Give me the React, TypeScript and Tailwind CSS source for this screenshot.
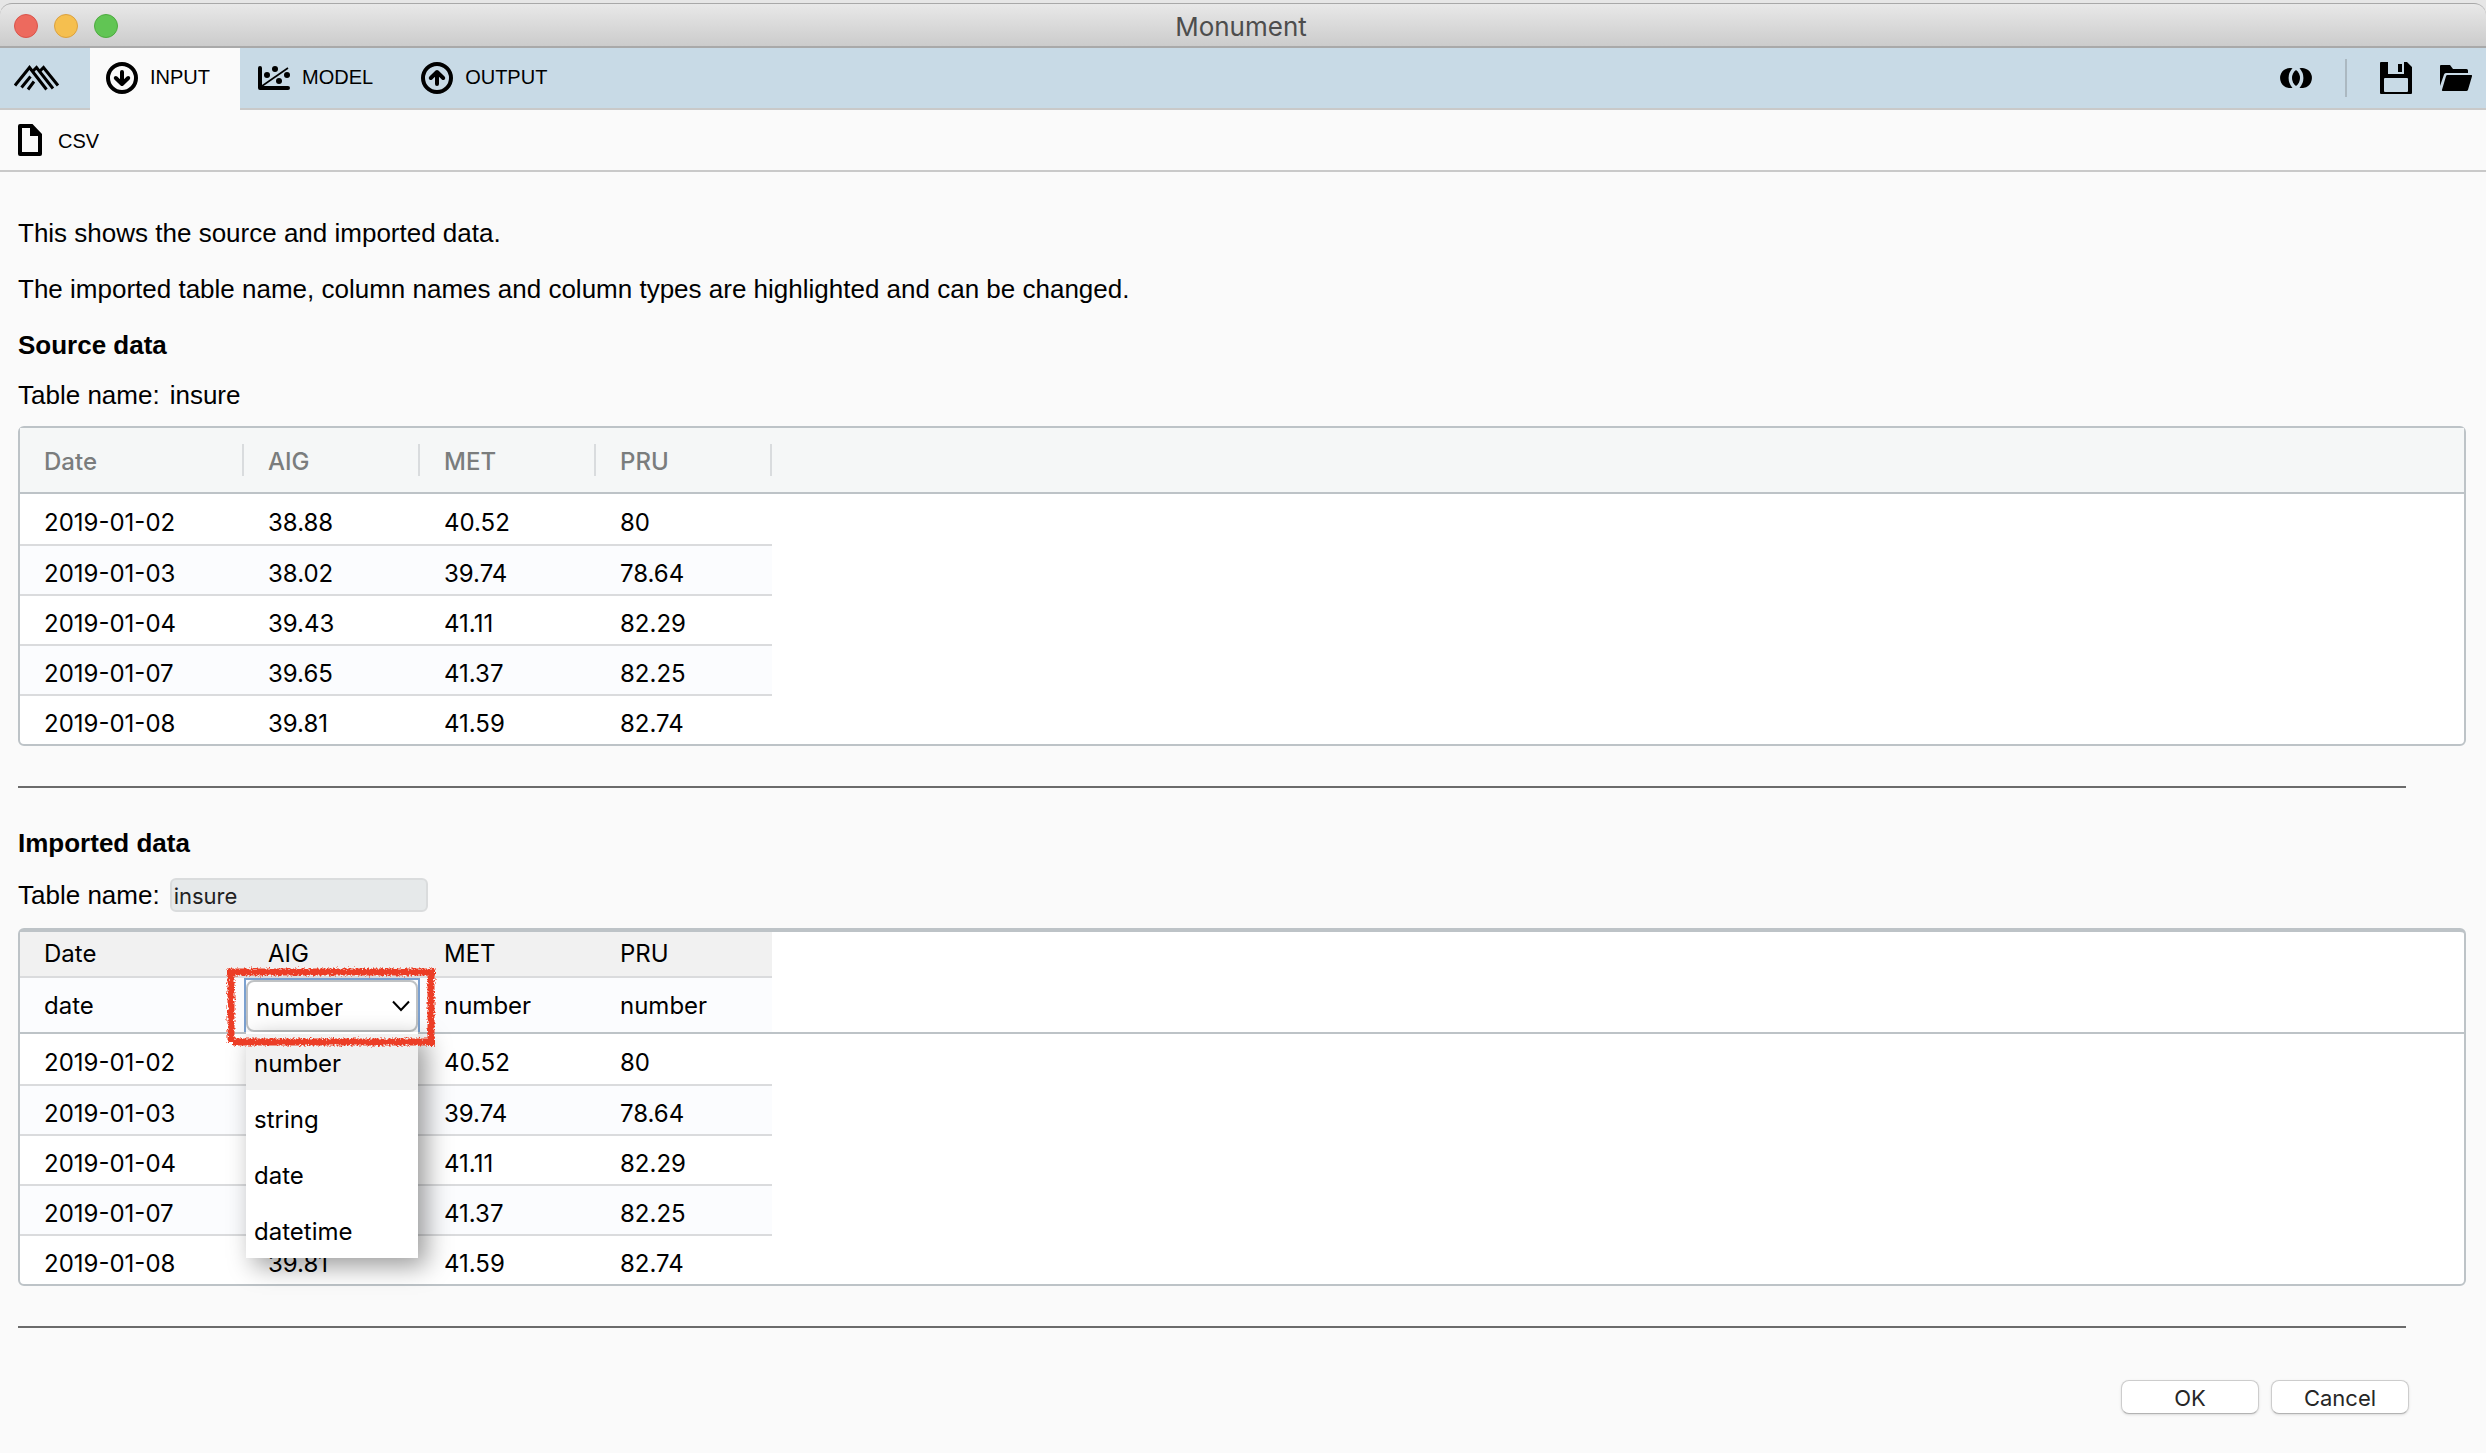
import React, { useState } from 'react';

const columns = ['Date', 'AIG', 'MET', 'PRU'];

const rows = [
  ['2019-01-02', '38.88', '40.52', '80'],
  ['2019-01-03', '38.02', '39.74', '78.64'],
  ['2019-01-04', '39.43', '41.11', '82.29'],
  ['2019-01-07', '39.65', '41.37', '82.25'],
  ['2019-01-08', '39.81', '41.59', '82.74'],
];

const typeOptions = ['number', 'string', 'date', 'datetime'];

function Logo() {
  return (
    <svg width="46" height="26" viewBox="0 0 46 26" fill="none" stroke="black" strokeWidth="3">
      <path d="M1 20.5 15.500 2.500l17 22" />
      <path d="M19 6 22.500 2.500l16.500 21" />
      <path d="M26 6 29.500 2.500l14.500 18" />
      <path d="M7.5 22.5 16.500 11.500M14 24.500l6-8" />
    </svg>
  );
}

function CircleArrow({ up = false }: { up?: boolean }) {
  return (
    <svg width="32" height="32" viewBox="0 0 32 32" fill="none" stroke="black" strokeWidth="4">
      <circle cx="16" cy="16" r="14" />
      {up ? (
        <path d="M16 22V11M9.800 16 16 10l6.200 6" strokeLinecap="round" strokeLinejoin="round" />
      ) : (
        <path d="M16 10v11M9.800 16 16 22l6.200-6" strokeLinecap="round" strokeLinejoin="round" />
      )}
    </svg>
  );
}

function ModelIcon() {
  return (
    <svg width="32" height="32" viewBox="0 0 32 32">
      <path d="M2 6v20h28" fill="none" stroke="black" strokeWidth="4" strokeLinecap="round" strokeLinejoin="round" />
      <path d="M4 24 30 6" stroke="black" strokeWidth="1.600" />
      <circle cx="9" cy="13" r="3" />
      <circle cx="17" cy="7" r="3" />
      <circle cx="29" cy="13" r="3" />
      <circle cx="21" cy="19" r="3" />
    </svg>
  );
}

function FileIcon() {
  return (
    <svg width="24" height="32" viewBox="0 0 24 32">
      <path
        fillRule="evenodd"
        d="M2 0h12.500L24 10v20a2 2 0 0 1-2 2H2a2 2 0 0 1-2-2V2a2 2 0 0 1 2-2Zm2 4v24h16V12h-8V4H4Z"
      />
    </svg>
  );
}

function OverlapIcon() {
  return (
    <svg width="32" height="20" viewBox="0 0 32 20">
      <path d="M12.500.3A10 10 0 1 0 12.500 19.700 14 14 0 0 1 12.500.3Z" />
      <path d="M19.500.3A10 10 0 1 1 19.500 19.700 14 14 0 0 0 19.500.3Z" />
      <path d="M16 2a10 10 0 0 1 0 16 10 10 0 0 1 0-16Z" />
    </svg>
  );
}

function SaveIcon() {
  return (
    <svg width="32" height="32" viewBox="0 0 32 32">
      <path
        fillRule="evenodd"
        d="M1 0h7v12h16V0h3l5 5v26a1 1 0 0 1-1 1H1a1 1 0 0 1-1-1V1a1 1 0 0 1 1-1Zm4 16a1 1 0 0 0-1 1v12a1 1 0 0 0 1 1h22a1 1 0 0 0 1-1V17a1 1 0 0 0-1-1H5Z"
      />
      <path d="M18 2h4v8h-4z" />
    </svg>
  );
}

function FolderIcon() {
  return (
    <svg width="32" height="26" viewBox="0 0 32 26">
      <path d="M0 21V1a1 1 0 0 1 1-1h9l3 4h13.500a1.500 1.500 0 0 1 1.500 1.500V8H6a2 2 0 0 0-2 1.500L0 21Z" />
      <path d="M7.500 10H31a1 1 0 0 1 1 1.300l-4 13.400a2 2 0 0 1-2 1.300H3a1 1 0 0 1-1-1.300L6 11.200A1.600 1.600 0 0 1 7.500 10Z" />
    </svg>
  );
}

// rough red marker outline around the active type selector
function MarkerFrame() {
  return (
    <svg
      className="pointer-events-none absolute -left-[22px] -top-3.5 z-20"
      width="214"
      height="84"
      viewBox="0 0 214 84"
      fill="none"
      stroke="#ec3d25"
      strokeWidth="7"
    >
      <filter id="rough" x="-5%" y="-10%" width="110%" height="120%">
        <feTurbulence type="fractalNoise" baseFrequency="0.550" numOctaves="2" seed="4" />
        <feDisplacementMap in="SourceGraphic" scale="6" xChannelSelector="R" yChannelSelector="G" />
      </filter>
      <g filter="url(#rough)">
        <path d="M3 6h208" />
        <path d="M7 3v73" />
        <path d="M9 76h202" />
        <path d="M207 3v77" />
      </g>
    </svg>
  );
}

function ColumnWidths() {
  return (
    <colgroup>
      <col className="w-[224px]" />
      <col className="w-[176px]" />
      <col className="w-[176px]" />
      <col className="w-[176px]" />
      <col />
    </colgroup>
  );
}

function DataRows() {
  return (
    <tbody>
      {rows.map((row) => (
        <tr key={row[0]} className="group h-[50px] first:h-[52px] last:h-[48px]">
          {row.map((value) => (
            <td
              key={value}
              className="border-b-2 border-[#dadbdd] pl-6 pt-2 group-even:bg-[#fbfcfe] group-last:border-b-0"
            >
              {value}
            </td>
          ))}
          <td />
        </tr>
      ))}
    </tbody>
  );
}

function TypeSelect() {
  const [type, setType] = useState('number');

  return (
    <div className="relative h-[54px] border-2 border-b-0 border-[#7ba0cf]">
      <select
        aria-label="AIG column type"
        value={type}
        onChange={(e) => setType(e.target.value)}
        className="h-full w-full appearance-none rounded-lg border-2 border-[#bfc2c4] bg-white pl-2 pt-1 outline-none"
      >
        {typeOptions.map((option) => (
          <option key={option}>{option}</option>
        ))}
      </select>
      <svg
        className="pointer-events-none absolute right-2 top-5"
        width="18"
        height="12"
        viewBox="0 0 18 12"
        fill="none"
        stroke="black"
        strokeWidth="2"
      >
        <path d="M1 1.500 9 10l8-8.500" />
      </svg>
      <ul
        role="listbox"
        aria-label="Column types"
        className="absolute left-0 top-full z-10 w-full bg-white pt-0.5 shadow-[8px_8px_24px_rgba(0,0,0,0.4)]"
      >
        {typeOptions.map((option) => (
          <li
            key={option}
            role="option"
            aria-selected={option === type}
            className="flex h-14 items-center pl-2 pt-1 aria-selected:bg-[#f1f1f1]"
          >
            {option}
          </li>
        ))}
      </ul>
      <MarkerFrame />
    </div>
  );
}

function SourceTable() {
  return (
    <div className="mt-[17px] rounded-md border-2 border-[#bdc3c7] bg-white font-['Inter',sans-serif]">
      <table className="w-full table-fixed border-separate border-spacing-0 text-left">
        <ColumnWidths />
        <thead>
          <tr className="h-[66px] text-[#7a7d7d]">
            {columns.map((name) => (
              <th key={name} className="border-b-2 border-[#bdc3c7] bg-[#f5f7f7] pl-6 font-medium">
                <span className="flex h-8 items-center border-r-2 border-[#d9dcde] pt-1">{name}</span>
              </th>
            ))}
            <td className="border-b-2 border-[#bdc3c7] bg-[#f5f7f7]" />
          </tr>
        </thead>
        <DataRows />
      </table>
    </div>
  );
}

function ImportedTable() {
  return (
    <div className="mt-4 rounded-md border-2 border-t-4 border-[#bdc3c7] bg-white font-['Inter',sans-serif]">
      <table className="w-full table-fixed border-separate border-spacing-0 text-left">
        <ColumnWidths />
        <thead>
          <tr className="h-[46px]">
            {columns.map((name) => (
              <th key={name} className="border-b-2 border-[#dadbdd] bg-[#f1f1f1] pl-6 font-normal">
                {name}
              </th>
            ))}
            <td />
          </tr>
          <tr className="h-14">
            <td className="border-b-2 border-[#bdc3c7] bg-[#fbfcfe] pl-6 pt-0.5">date</td>
            <td className="border-b-2 border-[#bdc3c7] bg-[#fbfcfe]">
              <TypeSelect />
            </td>
            <td className="border-b-2 border-[#bdc3c7] bg-[#fbfcfe] pl-6 pt-0.5">number</td>
            <td className="border-b-2 border-[#bdc3c7] bg-[#fbfcfe] pl-6 pt-0.5">number</td>
            <td className="border-b-2 border-[#bdc3c7]" />
          </tr>
        </thead>
        <DataRows />
      </table>
    </div>
  );
}

export default function App() {
  const [tableName, setTableName] = useState('insure');

  return (
    <div className="min-h-screen bg-[#fafafa] font-['Liberation_Sans',Arial,sans-serif] text-[24px] leading-7 text-black">
      <div className="bg-[#e6e6e6] pt-[3px]">
        <header className="grid h-[45px] grid-cols-3 items-center rounded-t-xl border-b-2 border-t border-b-[#a9a9a9] border-t-[#a8a8a8] bg-linear-to-b from-[#e8e8e8] to-[#cccccc]">
          <div className="flex gap-4 pl-3.5 pt-0.5">
            <button aria-label="Close" className="size-6 rounded-full border border-[#d9544b] bg-[#ed6a5e]" />
            <button aria-label="Minimize" className="size-6 rounded-full border border-[#dba13f] bg-[#f5bf4f]" />
            <button aria-label="Zoom" className="size-6 rounded-full border border-[#4dab3f] bg-[#61c554]" />
          </div>
          <h1 className="pr-1 pt-1 text-center font-['Inter',sans-serif] text-[26px] text-[#4d4d4d]">Monument</h1>
        </header>
      </div>

      <nav className="flex h-[62px] bg-[#c8dae6] text-[20px]">
        <button aria-label="Home" className="w-[90px] border-b-2 border-[#c9c9c9] pl-3.5">
          <Logo />
        </button>
        <button className="flex items-center gap-3 border-b-2 border-[#fafafa] bg-[#fafafa] pl-4 pr-[30px]">
          <CircleArrow />
          <span className="pb-0.5">INPUT</span>
        </button>
        <div className="flex grow gap-0.5 border-b-2 border-[#c9c9c9] pl-0.5">
          <button className="flex items-center gap-3 pl-4 pr-[30px]">
            <ModelIcon />
            <span className="pb-0.5">MODEL</span>
          </button>
          <button className="flex items-center gap-3 pl-4 pr-[30px]">
            <CircleArrow up />
            <span className="pb-0.5">OUTPUT</span>
          </button>
          <div className="ml-auto flex items-center pr-3.5">
            <button aria-label="Compare">
              <OverlapIcon />
            </button>
            <div className="mx-[33px] h-[38px] w-0.5 bg-[#abb8c1]" />
            <button aria-label="Save">
              <SaveIcon />
            </button>
            <button aria-label="Open" className="ml-7">
              <FolderIcon />
            </button>
          </div>
        </div>
      </nav>

      <div className="flex h-[62px] items-center border-b-2 border-[#c9c9c9] pl-[18px] text-[20px]">
        <button className="flex items-center gap-4">
          <FileIcon />
          <span className="pt-0.5">CSV</span>
        </button>
      </div>

      <main className="pl-[18px] pr-5 pt-[47px] text-[24px]">
        <p className="mb-7 text-[26px]">This shows the source and imported data.</p>
        <p className="mb-7 text-[26px]">
          The imported table name, column names and column types are highlighted and can be changed.
        </p>

        <h2 className="text-[26px] font-bold">Source data</h2>
        <div className="mt-[22px] flex gap-2.5 text-[26px]">
          <span>Table name:</span>
          <span>insure</span>
        </div>
        <SourceTable />
        <hr className="mr-[60px] mt-10 border-t-2 border-[#6b6b6b]" />

        <h2 className="mt-[41px] text-[26px] font-bold">Imported data</h2>
        <div className="mt-[21px] flex items-center gap-2.5 text-[26px]">
          <label htmlFor="table-name">Table name:</label>
          <input
            id="table-name"
            value={tableName}
            onChange={(e) => setTableName(e.target.value)}
            className="h-[34px] w-[258px] rounded-md border-2 border-[#dadcdd] bg-[#e6e9ea] pl-0.5 pt-0.5 font-['Inter',sans-serif] text-[22px] text-[#222222]"
          />
        </div>
        <ImportedTable />
        <hr className="mr-[60px] mt-10 border-t-2 border-[#6b6b6b]" />

        <div className="mb-9 mr-[57px] mt-[52px] flex justify-end gap-3 font-['Inter',sans-serif] text-[22px] text-[#262626]">
          <button className="h-[34px] w-[138px] rounded-lg border border-[#cdcdcd] border-b-[#b3b3b3] bg-white pt-0.5 shadow-sm">
            OK
          </button>
          <button className="h-[34px] w-[138px] rounded-lg border border-[#cdcdcd] border-b-[#b3b3b3] bg-white pt-0.5 shadow-sm">
            Cancel
          </button>
        </div>
      </main>
    </div>
  );
}
